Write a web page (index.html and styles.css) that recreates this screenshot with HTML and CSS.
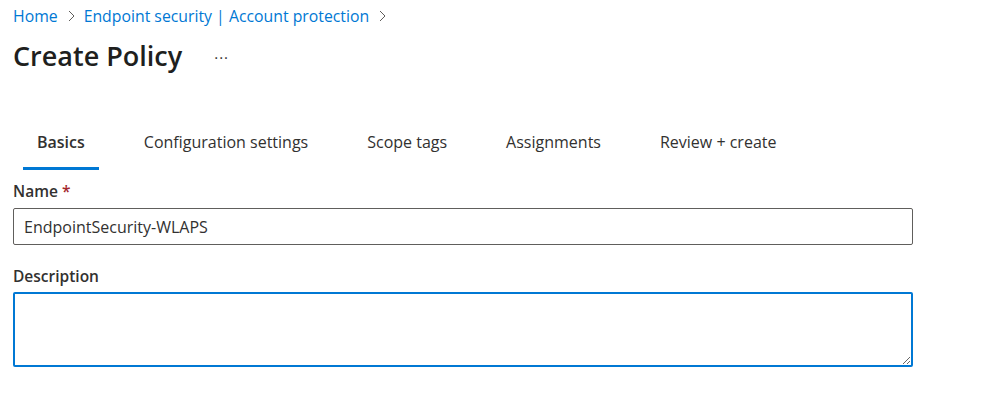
FILE: index.html
```html
<!DOCTYPE html>
<html lang="en">

<head>
  <meta charset="UTF-8">
  <meta name="viewport" content="width=device-width, initial-scale=1.0">
  <title>Create Policy</title>
  <link rel="stylesheet" href="styles.css">
</head>

<body>
  <div class="page">
    <ul class="breadcrumb">
      <li><a href="">Home</a></li>
      <li class="sep"><svg width="8" height="12" viewBox="0 0 8 12"><polyline points="2,1 7,6 2,11" fill="none" stroke="#605e5c" stroke-width="1"/></svg></li>
      <li><a href="">Endpoint security | Account protection</a></li>
      <li class="sep"><svg width="8" height="12" viewBox="0 0 8 12"><polyline points="2,1 7,6 2,11" fill="none" stroke="#605e5c" stroke-width="1"/></svg></li>
    </ul>

    <div class="title-row">
      <h1>Create Policy</h1>
      <span class="more">···</span>
    </div>

    <ul class="tabs">
      <li class="active">Basics</li>
      <li>Configuration settings</li>
      <li>Scope tags</li>
      <li>Assignments</li>
      <li>Review + create</li>
    </ul>

    <div class="field">
      <label class="label">Name <span class="req">*</span></label>
      <input class="input" type="text" value="EndpointSecurity-WLAPS">
    </div>

    <div class="field desc">
      <label class="label">Description</label>
      <textarea class="textarea"></textarea>
    </div>
  </div>
</body>

</html>
```
FILE: styles.css
```css
ul,
li {
  list-style: none;
  padding: 0;
  margin: 0;
}

a {
  text-decoration: none;
}

body {
  margin: 0;
  font-family: "Open Sans", "Noto Sans", sans-serif;
  color: #323130;
  background: #fff;
}

.page {
  padding: 0 13px;
}

.breadcrumb {
  display: flex;
  align-items: center;
  gap: 9px;
  height: 32px;
  font-size: 15.8px;
}

.breadcrumb a {
  color: #0078d4;
}

.breadcrumb .sep {
  display: flex;
  align-items: center;
}

.title-row {
  display: flex;
  align-items: center;
  height: 46px;
}

.title-row h1 {
  margin: 0;
  font-size: 27px;
  font-weight: 600;
  color: #201f1e;
}

.more {
  margin-left: 32px;
  font-size: 15px;
  letter-spacing: 1px;
  color: #323130;
  padding-top: 4px;
}

.tabs {
  display: flex;
  gap: 31px;
  margin-top: 52px;
  padding-left: 10px;
}

.tabs li {
  font-size: 16px;
  padding: 0 14px;
  line-height: 24px;
  padding-bottom: 13px;
  border-bottom: 3px solid transparent;
}

.tabs li.active {
  font-weight: 600;
  border-bottom-color: #0078d4;
}

.field {
  display: flex;
  flex-direction: column;
}

.label {
  font-size: 15.5px;
  font-weight: 600;
  line-height: 22px;
  margin-top: 10px;
  margin-bottom: 6px;
}

.desc .label {
  margin-top: 20px;
  margin-bottom: 5px;
}

.req {
  color: #a4262c;
}

.input {
  width: 900px;
  height: 37px;
  box-sizing: border-box;
  border: 1px solid #605e5c;
  border-radius: 2px;
  padding: 0 10px;
  font-family: inherit;
  font-size: 16px;
  color: #323130;
  outline: none;
}

.textarea {
  width: 900px;
  height: 75px;
  box-sizing: border-box;
  border: 2px solid #0078d4;
  border-radius: 2px;
  font-family: inherit;
  font-size: 15px;
  outline: none;
  margin-top: 0;
}
```
